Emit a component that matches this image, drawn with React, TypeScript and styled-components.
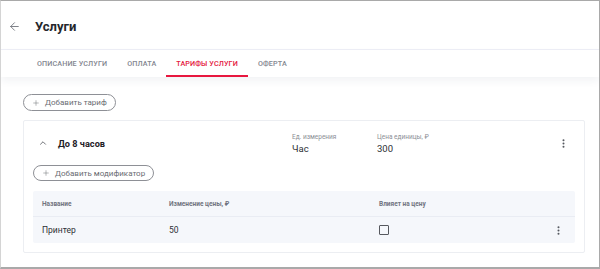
import React from "react";
import styled, { createGlobalStyle } from "styled-components";
import { ArrowLeft, ChevronUp, MoreVertical, Plus } from "lucide-react";

const GlobalStyle = createGlobalStyle`
  html, body {
    margin: 0;
    padding: 0;
    background: #ffffff;
  }
  body {
    font-family: Roboto, "Noto Sans", sans-serif;
    color: #2b2d33;
  }
`;

const Frame = styled.div`
  box-sizing: border-box;
  width: 600px;
  height: 269px;
  border: 1px solid #a9a9a9;
  border-left-color: #d4d4d4;
  border-bottom-width: 2px;
  background: #ffffff;
  overflow: hidden;
  display: flex;
  flex-direction: column;
`;

const Header = styled.header`
  height: 49px;
  display: flex;
  align-items: center;
  gap: 14px;
  padding: 3px 0 0 7px;
  box-sizing: border-box;
  border-bottom: 1px solid #eeeff7;
`;

const BackButton = styled.button`
  display: flex;
  align-items: center;
  justify-content: center;
  width: 13px;
  height: 13px;
  padding: 0;
  border: none;
  background: none;
  color: #6b6e76;
`;

const Title = styled.h1`
  margin: 0;
  font-size: 13px;
  font-weight: 700;
  color: #25272c;
`;

const TabBar = styled.nav`
  display: flex;
  height: 27px;
  padding-left: 26px;
  box-shadow: 0 4px 8px rgba(40, 50, 80, 0.06);
  position: relative;
  z-index: 1;
`;

const Tab = styled.div<{ $active?: boolean }>`
  display: flex;
  align-items: center;
  padding: 2px 10px 0;
  font-size: 7.2px;
  font-weight: 500;
  letter-spacing: 0.12px;
  text-transform: uppercase;
  color: ${(p) => (p.$active ? "#e4163d" : "#83868f")};
  border-bottom: 2px solid ${(p) => (p.$active ? "#e8173f" : "transparent")};
  box-sizing: border-box;
`;

const Content = styled.main`
  flex: 1;
  padding: 17px 14px 0 22px;
  display: flex;
  flex-direction: column;
  align-items: flex-start;
  gap: 9px;
`;

const OutlineButton = styled.button<{ $tall?: boolean }>`
  display: inline-flex;
  align-items: center;
  gap: 5px;
  height: ${(p) => (p.$tall ? 17 : 16)}px;
  padding: 0 8px;
  border: 1px solid #8e9096;
  border-radius: 9px;
  background: #ffffff;
  font-family: Roboto, sans-serif;
  font-size: 8px;
  color: #6a6c72;
  box-sizing: border-box;
`;

const Card = styled.section`
  align-self: stretch;
  border: 1px solid #eceef2;
  border-radius: 2px;
  padding: 10px 9px 9px 9px;
  display: flex;
  flex-direction: column;
  align-items: flex-start;
  gap: 10px;
`;

const CardHeader = styled.div`
  align-self: stretch;
  height: 24px;
  display: flex;
  align-items: center;
`;

const TariffName = styled.div`
  width: 259px;
  display: flex;
  align-items: center;
  gap: 10px;
  padding-left: 5px;
  box-sizing: border-box;
  font-size: 9.2px;
  font-weight: 700;
  color: #1f2126;
`;

const Field = styled.div`
  width: 85px;
  display: flex;
  flex-direction: column;
  gap: 2px;
`;

const FieldLabel = styled.span`
  font-size: 6.5px;
  color: #8c8f96;
`;

const FieldValue = styled.span`
  font-size: 9.5px;
  color: #2e3035;
`;

const KebabButton = styled.button<{ $offset?: number }>`
  margin-left: auto;
  margin-right: ${(p) => p.$offset ?? 0}px;
  display: flex;
  align-items: center;
  justify-content: center;
  width: 14px;
  height: 14px;
  padding: 0;
  border: none;
  background: none;
  color: #55585f;
`;

const Table = styled.div`
  align-self: stretch;
  background: #f5f7fb;
  border-radius: 2px;
`;

const Row = styled.div<{ $head?: boolean }>`
  display: grid;
  grid-template-columns: 127px 210px 1fr 20px;
  align-items: center;
  height: ${(p) => (p.$head ? 25 : 26)}px;
  padding: 0 10px 0 9px;
  border-bottom: ${(p) => (p.$head ? "1px solid #e9ecf3" : "none")};
  font-size: ${(p) => (p.$head ? "6.5px" : "8.5px")};
  font-weight: ${(p) => (p.$head ? 700 : 400)};
  color: ${(p) => (p.$head ? "#717480" : "#2e3035")};
`;

const Checkbox = styled.span`
  width: 10px;
  height: 10px;
  border: 1.5px solid #56585e;
  border-radius: 1px;
  box-sizing: border-box;
`;

const tabs = ["Описание услуги", "Оплата", "Тарифы услуги", "Оферта"];

export default function App() {
  return (
    <Frame>
      <GlobalStyle />
      <Header>
        <BackButton>
          <ArrowLeft size={13} strokeWidth={1.6} />
        </BackButton>
        <Title>Услуги</Title>
      </Header>
      <TabBar>
        {tabs.map((t) => (
          <Tab key={t} $active={t === "Тарифы услуги"}>
            {t}
          </Tab>
        ))}
      </TabBar>
      <Content>
        <OutlineButton $tall>
          <Plus size={8} strokeWidth={1.5} />
          Добавить тариф
        </OutlineButton>
        <Card>
          <CardHeader>
            <TariffName>
              <ChevronUp size={10} strokeWidth={2} color="#55585f" />
              До 8 часов
            </TariffName>
            <Field>
              <FieldLabel>Ед. измерения</FieldLabel>
              <FieldValue>Час</FieldValue>
            </Field>
            <Field>
              <FieldLabel>Цена единицы, ₽</FieldLabel>
              <FieldValue>300</FieldValue>
            </Field>
            <KebabButton $offset={5}>
              <MoreVertical size={11} strokeWidth={2.4} />
            </KebabButton>
          </CardHeader>
          <OutlineButton>
            <Plus size={8} strokeWidth={1.5} />
            Добавить модификатор
          </OutlineButton>
          <Table>
            <Row $head>
              <span>Название</span>
              <span>Изменение цены, ₽</span>
              <span>Влияет на цену</span>
              <span />
            </Row>
            <Row>
              <span>Принтер</span>
              <span>50</span>
              <Checkbox />
              <KebabButton>
                <MoreVertical size={11} strokeWidth={2.4} />
              </KebabButton>
            </Row>
          </Table>
        </Card>
      </Content>
    </Frame>
  );
}
